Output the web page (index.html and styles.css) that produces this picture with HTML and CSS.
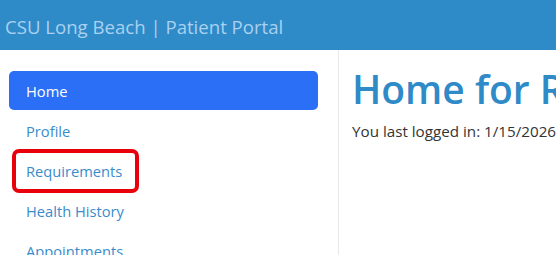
FILE: index.html
```html
<!DOCTYPE html>
<html>
<head>
<meta charset="utf-8">
<link rel="stylesheet" href="styles.css">
</head>
<body>
<header class="topbar">
  <span class="brand">CSU Long Beach | Patient Portal</span>
</header>
<div class="layout">
  <nav class="sidebar">
    <a class="nav-item active">Home</a>
    <a class="nav-item">Profile</a>
    <a class="nav-item highlighted">Requirements</a>
    <a class="nav-item">Health History</a>
    <a class="nav-item">Appointments</a>
  </nav>
  <main class="content">
    <h1 class="title">Home for Robert Smith</h1>
    <p class="last-login">You last logged in: 1/15/2026 9:42 AM</p>
  </main>
</div>
</body>
</html>
```
FILE: styles.css
```css
html, body {
  margin: 0;
  padding: 0;
  overflow: hidden;
  background: #fff;
  font-family: "Open Sans", "Noto Sans", sans-serif;
}
.topbar {
  height: 50px;
  box-sizing: border-box;
  padding: 3px 0 0 5px;
  background: #2f8ac8;
  display: flex;
  align-items: center;
}
.brand {
  color: #a9d1f0;
  font-size: 18.6px;
  white-space: nowrap;
}
.layout {
  display: flex;
  height: 205px;
  overflow: hidden;
}
.sidebar {
  width: 309px;
  flex: none;
  padding: 21px 20px 0 9px;
  border-right: 1px solid #e8e8e8;
  display: flex;
  flex-direction: column;
}
.nav-item {
  position: relative;
  display: flex;
  align-items: center;
  height: 40px;
  padding-left: 17px;
  font-size: 14.7px;
  color: #3a8ccc;
  border-radius: 5px;
  white-space: nowrap;
  flex: none;
}
.nav-item.active {
  height: 39px;
  margin-bottom: 1px;
  background: #2a6ff6;
  color: #fff;
}
.nav-item.highlighted::after {
  content: "";
  position: absolute;
  left: 3px;
  top: -2px;
  width: 119px;
  height: 36px;
  border: 4px solid #e8000b;
  border-radius: 7px;
}
.content {
  padding-left: 13px;
  white-space: nowrap;
  overflow: hidden;
}
.title {
  margin: 15px 0 0 0;
  font-size: 39px;
  font-weight: 600;
  color: #2f8ac8;
  line-height: 48px;
}
.last-login {
  margin: 8px 0 0 0;
  font-size: 15.2px;
  color: #333;
}
```
